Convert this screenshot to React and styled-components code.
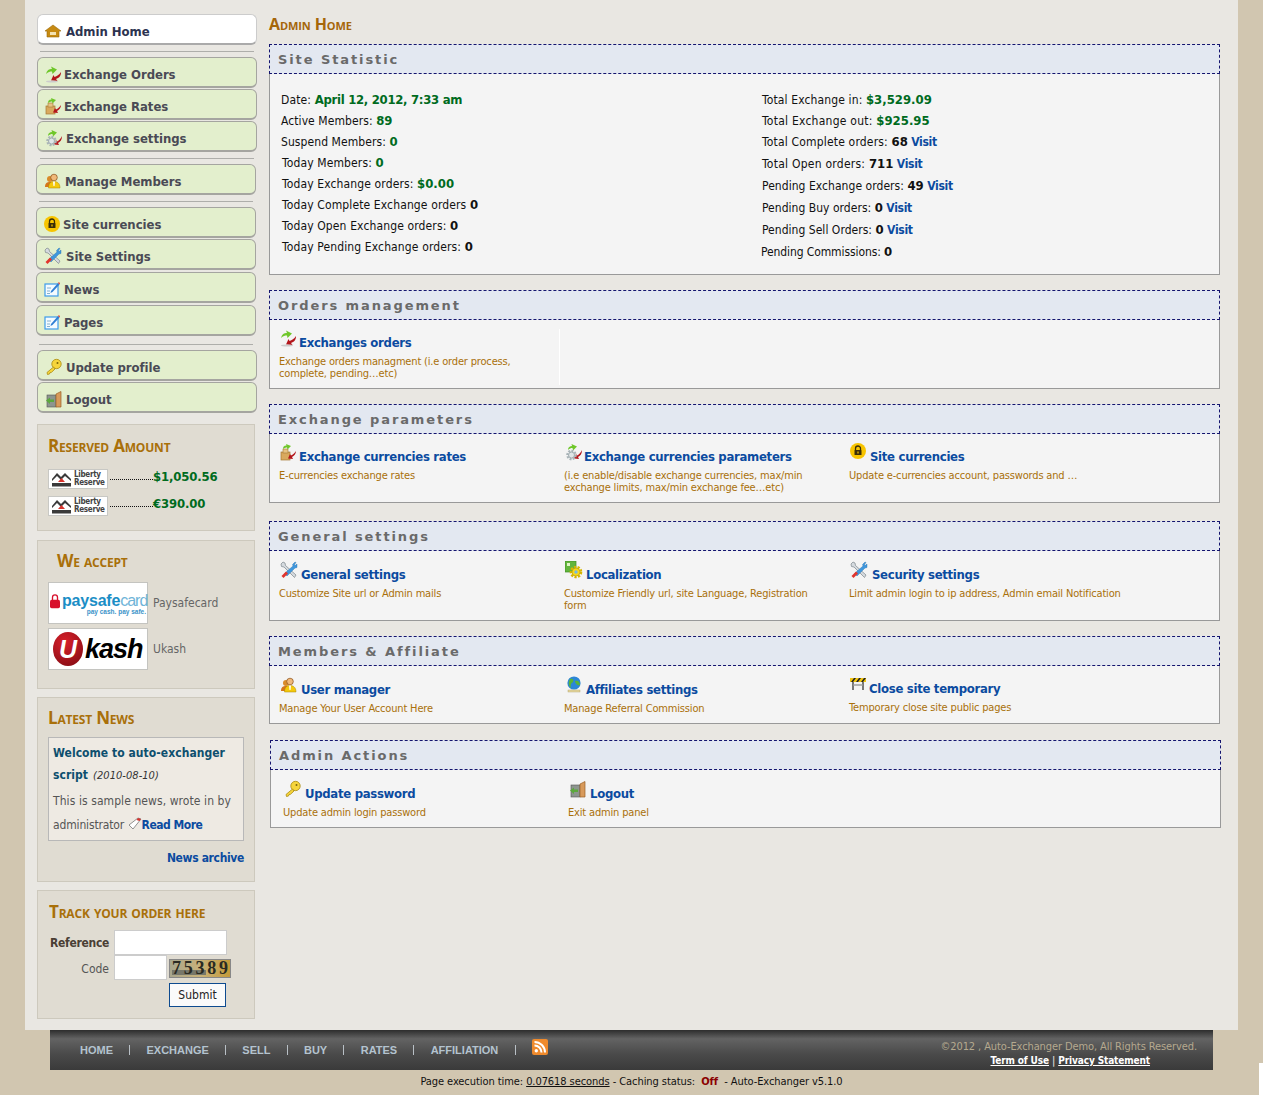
import React from "react";
import styled, { createGlobalStyle } from "styled-components";

const SANS = '"DejaVu Sans", Verdana, sans-serif';
const GREEN = "#006b1e";
const LINK = "#0b4ba0";
const GOLD = "#a9700a";

const GlobalStyle = createGlobalStyle`
  html, body {
    margin: 0;
    padding: 0;
    background: #d1c6b0;
  }
  body {
    color: #111;
    font-family: ${SANS};
    font-size: 12px;
    font-stretch: condensed;
  }
`;

const Page = styled.div`
  height: 1095px;
  overflow: hidden;
  position: relative;
  width: 1263px;
`;

const Shell = styled.div`
  background: #e9e7e2;
  display: flex;
  height: 1030px;
  margin-left: 25px;
  padding-left: 11px;
  width: 1202px;
`;

const Sidebar = styled.aside`
  flex: none;
  padding-top: 14px;
  width: 233px;
`;

const MenuItem = styled.a`
  align-items: center;
  background: ${({ $active }) => ($active ? "#fff" : "#e3efcd")};
  border: 1px solid #bbb;
  border-bottom: 2px solid #a5a5a0;
  border-color: ${({ $active }) => ($active ? "#ccc #ccc #aaa" : "#a5a5a0")};
  border-radius: 6px;
  box-sizing: border-box;
  color: ${({ $active }) => ($active ? "#2c3350" : "#4a4a55")};
  display: flex;
  font-size: 13px;
  font-weight: bold;
  height: 31px;
  letter-spacing: -0.04px;
  margin-left: ${({ $shift }) => $shift}px;
  margin-top: ${({ $gap }) => $gap}px;
  padding-left: 7px;
  padding-top: 4px;
  width: 220px;
`;

const MenuLabel = styled.span`
  margin-left: ${({ $indent }) => $indent}px;
  margin-top: 1px;
`;

const MenuRule = styled.hr`
  background: #aeaeaa;
  border: 0;
  height: 1px;
  margin: ${({ $top }) => $top}px 0 5px ${({ $shift }) => $shift + 3}px;
  width: 214px;
`;

const SideBox = styled.section`
  background: #e0dcd2;
  border: 1px solid #cdc9bd;
  box-sizing: border-box;
  height: ${({ $height }) => $height}px;
  margin-left: 1px;
  margin-top: ${({ $top }) => $top}px;
  padding: ${({ $pad }) => $pad};
  width: 218px;
`;

const BoxTitle = styled.h3`
  color: ${GOLD};
  font-family: "Open Sans", ${SANS};
  font-size: 17px;
  font-stretch: normal;
  font-variant: small-caps;
  font-weight: bold;
  letter-spacing: -0.2px;
  line-height: 20px;
  margin: -1px 0 4px;
  padding-left: ${({ $indent }) => $indent || 0}px;
`;

const ReserveRow = styled.div`
  align-items: flex-start;
  display: flex;
  height: 20px;
  margin-top: ${({ $top }) => $top}px;
`;

const LibertyLogo = styled.div`
  align-items: center;
  background: #fff;
  border: 1px solid #c8c8c4;
  box-sizing: border-box;
  display: flex;
  gap: 2px;
  height: 20px;
  padding-left: 3px;
  width: 60px;
`;

const LibertyText = styled.span`
  color: #444;
  font-size: 8px;
  font-weight: bold;
  letter-spacing: -0.3px;
  line-height: 8.5px;
`;

const Dots = styled.span`
  border-bottom: 1px dotted #111;
  height: 10px;
  margin-left: 2px;
  width: 43px;
`;

const Amount = styled.b`
  color: ${GREEN};
  font-size: 13px;
  letter-spacing: -0.15px;
  line-height: 15px;
`;

const AcceptRow = styled.div`
  align-items: center;
  color: #666;
  display: flex;
  gap: 5px;
  margin-top: ${({ $top }) => $top}px;
`;

const LogoCard = styled.div`
  align-items: center;
  background: #fff;
  border: 1px solid #c4c4c0;
  box-sizing: border-box;
  display: flex;
  height: 42px;
  position: relative;
  width: 100px;
`;

const PayWord = styled.span`
  color: #1b8ec6;
  font-family: "Liberation Sans", sans-serif;
  font-size: 16px;
  font-stretch: normal;
  font-weight: bold;
  letter-spacing: -0.2px;
  line-height: 18px;
  margin-left: 2px;
`;

const PayLight = styled.span`
  color: #6fb4d8;
  font-weight: normal;
  letter-spacing: -1px;
`;

const PayTag = styled.span`
  color: #3b93c9;
  font-family: "Liberation Sans", sans-serif;
  font-size: 6.5px;
  font-weight: bold;
  position: absolute;
  right: 1px;
  top: 25px;
`;

const PayStack = styled.div`
  align-items: center;
  display: flex;
  margin-top: -4px;
  padding-left: 1px;
`;

const KashWord = styled.span`
  color: #000;
  font-family: "Liberation Sans", sans-serif;
  font-size: 27px;
  font-stretch: normal;
  font-style: italic;
  font-weight: bold;
  letter-spacing: -1px;
  margin-left: 2px;
`;

const UkashBall = styled.span`
  align-items: center;
  background: radial-gradient(circle at 40% 30%, #d8202a, #7d0a12);
  border-radius: 50%;
  color: #fff;
  display: flex;
  flex: none;
  font-family: "Liberation Sans", sans-serif;
  font-size: 25px;
  font-style: italic;
  font-weight: bold;
  height: 34px;
  justify-content: center;
  margin-left: 4px;
  width: 30px;
`;

const NewsCard = styled.div`
  background: #eeeae3;
  border: 1px solid #b8b8b8;
  box-sizing: border-box;
  color: #555;
  height: 104px;
  letter-spacing: 0.08px;
  line-height: 24px;
  margin-top: 9px;
  padding: 4px 4px;
  width: 196px;
`;

const NewsHead = styled.b`
  color: #0d4f6e;
  display: block;
  letter-spacing: 0.05px;
  line-height: 22px;
  margin-bottom: 2px;
`;

const NewsDate = styled.i`
  color: #333;
  display: inline-block;
  font-size: 11px;
  font-weight: normal;
  margin-left: 5px;
`;

const NewsAuthor = styled.span`
  letter-spacing: -0.15px;
`;

const InlineLink = styled.a`
  color: ${LINK};
  font-weight: bold;
  letter-spacing: -0.5px;
`;

const ArchiveLink = styled.a`
  color: ${LINK};
  display: block;
  font-weight: bold;
  letter-spacing: -0.35px;
  margin-top: 10px;
  text-align: right;
  width: 196px;
`;

const TrackGrid = styled.div`
  display: grid;
  grid-template-columns: 64px 53px auto;
  grid-template-rows: 25px 28px 24px;
  margin-left: 1px;
  margin-top: 8px;
`;

const TrackLabel = styled.label`
  align-self: center;
  color: ${({ $strong }) => ($strong ? "#4a3f35" : "#555")};
  font-weight: ${({ $strong }) => ($strong ? "bold" : "normal")};
  letter-spacing: ${({ $strong }) => ($strong ? "-0.3px" : "0")};
  padding-right: 5px;
  text-align: right;
`;

const TrackInput = styled.input`
  background: #fff;
  border: 1px solid #ccc;
  box-sizing: border-box;
  grid-column: ${({ $span }) => ($span ? "2 / span 2" : "auto")};
  height: 25px;
  padding: 0;
  width: ${({ $span }) => ($span ? 113 : 53)}px;
`;

const Captcha = styled.svg`
  margin: 4px 0 0 2px;
`;

const SubmitButton = styled.button`
  background: #fafafa;
  border: 1px solid #0d4a8f;
  box-sizing: border-box;
  color: #222;
  font-family: ${SANS};
  font-size: 12px;
  font-stretch: condensed;
  grid-column: 3;
  height: 24px;
  margin-left: 2px;
  padding: 0;
  width: 57px;
`;

const Content = styled.main`
  flex: none;
  width: 952px;
`;

const PageTitle = styled.h1`
  color: #a5660a;
  font-family: "Open Sans", ${SANS};
  font-size: 16px;
  font-stretch: normal;
  font-variant: small-caps;
  font-weight: bold;
  height: 44px;
  letter-spacing: -0.1px;
  line-height: 48px;
  margin: 0;
`;

const Panel = styled.section`
  margin-bottom: ${({ $after }) => $after}px;
  margin-left: ${({ $shift }) => $shift || 0}px;
  width: 951px;
`;

const PanelHead = styled.h2`
  background: #e3e8f1;
  border: 1px dashed #14146e;
  box-sizing: border-box;
  color: #6a6a6a;
  font-family: ${SANS};
  font-size: 13px;
  font-stretch: normal;
  font-weight: bold;
  height: 30px;
  letter-spacing: 1.9px;
  line-height: 30px;
  margin: 0;
  padding-left: 8px;
`;

const PanelBody = styled.div`
  background: #f4f4f4;
  border: 1px solid #999;
  border-top: 0;
  box-sizing: border-box;
  height: ${({ $height }) => $height}px;
`;

const StatGrid = styled.div`
  display: grid;
  grid-template-columns: 481px 1fr;
  padding: 15px 0 0 11px;
`;

const StatRow = styled.div`
  height: ${({ $h }) => $h}px;
  letter-spacing: ${({ $spacing }) => $spacing}px;
  line-height: 21px;
  margin-left: ${({ $shift }) => $shift || 0}px;
`;

const StatValue = styled.b`
  color: ${({ $plain }) => ($plain ? "#111" : GREEN)};
  font-size: 13px;
  letter-spacing: ${({ $tight }) => ($tight ? "-0.3px" : "0")};
`;

const VisitLink = styled.a`
  color: ${LINK};
  font-weight: bold;
  letter-spacing: -0.3px;
`;

const TileGrid = styled.div`
  display: grid;
  grid-template-columns: repeat(3, 285px);
  padding: ${({ $pad }) => $pad};
`;

const Tile = styled.div`
  border-right: ${({ $divided }) => ($divided ? "1px solid #fff" : "0")};
  height: ${({ $divided }) => ($divided ? "56px" : "auto")};
  margin-top: ${({ $lift }) => ($lift ? "-1px" : 0)};
  width: ${({ $divided }) => ($divided ? "280px" : "auto")};
`;

const TileHead = styled.div`
  align-items: flex-end;
  color: ${LINK};
  display: flex;
  font-size: 13px;
  font-weight: bold;
  height: 21px;
  letter-spacing: -0.3px;
`;

const TileIcon = styled.span`
  display: block;
  flex: none;
  height: 21px;
  padding-left: 1px;
  width: ${({ $w }) => $w - 1}px;
`;

const TileText = styled.p`
  color: ${GOLD};
  font-size: 11px;
  letter-spacing: -0.17px;
  line-height: 12px;
  margin: 6px 0 0;
  width: ${({ $w }) => $w || 250}px;
`;

const Footer = styled.footer`
  align-items: flex-start;
  background: linear-gradient(#2d2d2d, #636363 22%, #4a4a4a 60%, #3a3a3a);
  box-sizing: border-box;
  display: flex;
  height: 40px;
  justify-content: space-between;
  margin-left: 50px;
  padding: 0 16px 0 30px;
  width: 1163px;
`;

const FootNav = styled.nav`
  align-items: center;
  display: flex;
  height: 40px;
`;

const FootLink = styled.a`
  color: #b4c3cf;
  font-family: "Liberation Sans", sans-serif;
  font-size: 11px;
  font-stretch: normal;
  font-weight: bold;
`;

const FootBar = styled.span`
  background: #b9c0c6;
  height: 10px;
  margin: 0 16.25px;
  width: 1px;
`;

const Legal = styled.div`
  color: #b5a98f;
  font-size: 11px;
  letter-spacing: -0.1px;
  line-height: 15px;
  padding-top: 9px;
  text-align: right;
`;

const LegalLinks = styled.div`
  color: #d5d5d5;
  font-size: 10px;
  font-weight: bold;
  letter-spacing: -0.12px;
  margin-right: 47px;
  margin-top: -1px;
  text-align: right;
`;

const LegalLink = styled.a`
  color: #fff;
  text-decoration: underline;
`;

const Execution = styled.div`
  color: #111;
  font-size: 11px;
  letter-spacing: -0.07px;
  line-height: 24px;
  text-align: center;
`;

const ExecTime = styled.span`
  text-decoration: underline;
`;

const CacheOff = styled.b`
  color: #8b0000;
`;

const Corner = styled.div`
  background: #fff;
  bottom: 0;
  height: 32px;
  position: absolute;
  right: 0;
  width: 4px;
`;

const Glyph = ({ children, size = 18, box = 18 }) => (
  <svg width={size} height={size} viewBox={`0 0 ${box} ${box}`} style={{ display: "block" }}>
    {children}
  </svg>
);

const Arrows = () => (
  <>
    <path d="M1 9 C2 5 4 4 7 4 L6 1.5 L12 4.5 L7.5 9 L7 6.5 C5 6.5 3 7 1 9Z" fill="#6fc72a" />
    <path d="M16 7 C16 11 14 13 11 14 L12.5 16 L6 15.5 L8.5 10 L9.5 12 C12 11 14 10 16 7Z" fill="#b3151b" />
  </>
);

const ExchangeIcon = () => (
  <Glyph>
    <Arrows />
    <ellipse cx="7" cy="16.5" rx="6" ry="1" fill="#ccc" />
  </Glyph>
);

const RatesIcon = () => (
  <Glyph>
    <rect x="1" y="9" width="9" height="8" fill="#d9a95e" stroke="#a57a34" strokeWidth=".7" />
    <rect x="3" y="6" width="5" height="4" fill="#e6c283" stroke="#a57a34" strokeWidth=".6" />
    <path d="M3 6 C3 3 5 2.5 6.5 2.5 L6 1 L11 3 L7.5 6.5 L7 4.5 C5.5 4.5 4.5 5 3 6Z" fill="#6fc72a" />
    <path d="M16 8 C16 11 14 13 12 14 L13 16 L8 15.5 L10 11 L11 12.5 C13 11.5 14.5 10 16 8Z" fill="#b3151b" />
  </Glyph>
);

const GearArrowsIcon = () => (
  <Glyph>
    <path d="M3 7 C3 4 5 3 7 3 L6.5 1 L12 3.5 L8 7.5 L7.5 5 C6 5 4.5 5.5 3 7Z" fill="#6fc72a" />
    <path d="M17 7 C17 11 15 13 13 14 L14 16 L9 15.5 L11 11 L12 12.5 C14 11.5 15.5 10 17 7Z" fill="#b3151b" />
    <circle cx="6.5" cy="12" r="4.2" fill="none" stroke="#a9b4b8" strokeWidth="2.2" strokeDasharray="2 1.2" />
    <circle cx="6.5" cy="12" r="3" fill="#dfe5e7" stroke="#8d9a9f" strokeWidth=".8" />
  </Glyph>
);

const HomeIcon = () => (
  <Glyph size={16} box={16}>
    <path d="M0 8 L8 2 L16 8 L14 8 L14 14 L2 14 L2 8Z" fill="#c68a12" stroke="#9c6a08" strokeWidth=".6" />
    <rect x="5" y="9" width="6" height="3" fill="#f3e2b2" />
  </Glyph>
);

const MembersIcon = () => (
  <Glyph>
    <circle cx="6" cy="7" r="3" fill="#d98b2a" />
    <path d="M1 15 C1 11 3 10 6 10 C9 10 10 11 10 15Z" fill="#d4761c" />
    <circle cx="10" cy="5.5" r="3.3" fill="#f0b97a" stroke="#8a4f18" strokeWidth=".7" />
    <path d="M4.5 16 C4.5 11 7 9.5 10 9.5 C13 9.5 16 11 16 16Z" fill="#f4c90c" stroke="#a88505" strokeWidth=".5" />
    <path d="M9 9.5 L11 9.5 L10.5 14 L9.5 14Z" fill="#fff" />
  </Glyph>
);

const LockCoinIcon = ({ size = 16 }) => (
  <Glyph size={size} box={16}>
    <circle cx="8" cy="8" r="8" fill="#f7c400" />
    <path d="M5.5 7 V5.5 a2.5 2.5 0 0 1 5 0 V7" fill="none" stroke="#3a2e08" strokeWidth="1.3" />
    <rect x="4.5" y="7" width="7" height="5" rx=".6" fill="#3a2e08" />
    <rect x="7.4" y="8.5" width="1.2" height="2" fill="#f7c400" />
  </Glyph>
);

const ToolsIcon = () => (
  <Glyph>
    <path d="M1 3 L3 1 L5 2 L5.5 4.5 L16 14 L14.5 16.5 L4 6 L1.5 5.5Z" fill="#d5dadf" stroke="#7d868d" strokeWidth=".7" />
    <path d="M15 1 L12.5 3.5 L13 5 L4.5 12.5 L7 15 L15 7 L17 6.5 L17 3 L15 4.5 L14.5 3.5 L16 1.5Z" fill="#3f97dd" stroke="#2670ad" strokeWidth=".4" />
    <path d="M1.5 15 L6 10.5 L8 12.5 L3.5 17Z" fill="#e2352d" />
  </Glyph>
);

const NoteIcon = ({ size = 16 }) => (
  <Glyph size={size} box={16}>
    <rect x="1" y="3" width="13" height="12" fill="#f4fbff" stroke="#3c9bea" strokeWidth="1.2" />
    <path d="M3 7 H7 M3 10 H6 M3 12.5 H6" stroke="#6a9ec4" strokeWidth=".8" />
    <path d="M7 10 L14 2 L15.5 3.5 L8.5 11 L6.5 12Z" fill="#2f7fd4" />
    <path d="M14 2 L15 1 L16 2.5 L15.5 3.5Z" fill="#e2453a" />
  </Glyph>
);

const KeyIcon = () => (
  <Glyph>
    <circle cx="11.5" cy="6" r="4.7" fill="#f6d53b" stroke="#a98a10" strokeWidth=".8" />
    <circle cx="12.5" cy="5" r="1" fill="#7d640a" />
    <path d="M8.5 9 L2 14.5 L2.5 16.5 L4.5 16 L5 14.5 L6.5 14.3 L10 11Z" fill="#f6d53b" stroke="#a98a10" strokeWidth=".8" />
  </Glyph>
);

const DoorIcon = () => (
  <Glyph>
    <rect x="2" y="5" width="9" height="12" fill="#8d958f" stroke="#555" strokeWidth=".6" />
    <path d="M11 4 L16 1.5 V17 H11Z" fill="#d89a5b" stroke="#9a6026" strokeWidth=".7" />
    <path d="M1 10.5 L5 7.5 V9.5 H9 V12 H5 V14Z" fill="#5ba83c" />
  </Glyph>
);

const LocalizationIcon = () => (
  <Glyph>
    <rect x="0" y="0" width="11" height="11" fill="#62b53c" stroke="#3c8a22" strokeWidth=".7" />
    <rect x="2" y="2" width="3" height="3" fill="#dff3c5" />
    <circle cx="11" cy="11" r="5" fill="none" stroke="#d7b600" strokeWidth="2.6" strokeDasharray="2.2 1.3" />
    <circle cx="11" cy="11" r="4" fill="#f7d917" stroke="#b2930a" strokeWidth=".6" />
    <circle cx="11" cy="11" r="1.7" fill="#73b8e6" />
  </Glyph>
);

const GlobeIcon = () => (
  <Glyph>
    <circle cx="9" cy="7" r="6.6" fill="#2c86d6" />
    <path d="M5 3 C8 2 9 4 8 6 C6 7 5 9 6 12 C3.5 10 3 6 5 3Z M10 5 C13 4 15 6 15 9 C13 10 10 8 10 5Z" fill="#58b33a" />
    <rect x="3" y="14" width="12" height="2" fill="#e8d9a0" stroke="#a89a60" strokeWidth=".4" />
  </Glyph>
);

const BarrierIcon = () => (
  <Glyph>
    <path d="M0 3 H16 V7 H0Z" fill="#f1c40f" />
    <path d="M1 7 L4 3 H6 L3 7Z M6 7 L9 3 H11 L8 7Z M11 7 L14 3 H16 L13 7Z" fill="#222" />
    <path d="M3 7 V15 M13 7 V15" stroke="#777" strokeWidth="2" />
    <path d="M3 10 H13" stroke="#999" strokeWidth="1.4" />
  </Glyph>
);

const LibertyMark = () => (
  <svg width="20" height="15" viewBox="0 0 20 15" style={{ flex: "none" }}>
    <path d="M0 7 L5 1 L9 5 L13 1 L19 7 L19 9 L13 4 L9 8 L5 4 L0 9Z" fill="#3a3a3a" />
    <path d="M6 10 L9.5 6 L13 10Z" fill="#d6322c" />
    <rect y="11" width="19" height="3.5" fill="#3a3a3a" />
  </svg>
);

const PadlockMark = () => (
  <svg width="10" height="17" viewBox="0 0 12 18" style={{ flex: "none" }}>
    <path d="M3 8 V4 a3 3 0 0 1 6 0 V8" fill="none" stroke="#d8102c" strokeWidth="1.6" />
    <rect x="0" y="7" width="12" height="10" rx="2" fill="#d8102c" />
  </svg>
);

const PenMark = () => (
  <svg width="14" height="14" viewBox="0 0 14 14" style={{ verticalAlign: "-2px" }}>
    <path d="M1 8 L5 12 L13 2 L10 1Z" fill="#fff" stroke="#777" strokeWidth=".8" />
    <path d="M10 1 L13 2 L11.5 4 L8.5 3Z" fill="#d6322c" />
  </svg>
);

const RssIcon = () => (
  <svg width="16" height="16" viewBox="0 0 16 16" style={{ display: "block", marginTop: -6 }}>
    <rect width="16" height="16" rx="2" fill="#ef8a2c" />
    <circle cx="4.3" cy="11.7" r="1.7" fill="#fff" />
    <path d="M2.5 6.5 A7 7 0 0 1 9.5 13.5 M2.5 3 A10.5 10.5 0 0 1 13 13.5" fill="none" stroke="#fff" strokeWidth="2" />
  </svg>
);

const menu = [
  { label: "Admin Home", icon: <HomeIcon />, shift: 1, gap: 0, active: true, indent: 5, ruleTop: 6 },
  { label: "Exchange Orders", icon: <ExchangeIcon />, shift: 1, gap: 0, indent: 1 },
  { label: "Exchange Rates", icon: <RatesIcon />, shift: 1, gap: 1, indent: 1 },
  { label: "Exchange settings", icon: <GearArrowsIcon />, shift: 1, gap: 1, indent: 3, ruleTop: 6 },
  { label: "Manage Members", icon: <MembersIcon />, shift: 0, gap: 0, indent: 3, ruleTop: 6 },
  { label: "Site currencies", icon: <LockCoinIcon />, shift: 0, gap: 0, indent: 3 },
  { label: "Site Settings", icon: <ToolsIcon />, shift: 0, gap: 1, indent: 4 },
  { label: "News", icon: <NoteIcon />, shift: 0, gap: 2, indent: 4 },
  { label: "Pages", icon: <NoteIcon />, shift: 0, gap: 2, indent: 4, ruleTop: 8 },
  { label: "Update profile", icon: <KeyIcon />, shift: 1, gap: 0, indent: 3 },
  { label: "Logout", icon: <DoorIcon />, shift: 1, gap: 1, indent: 3 },
];

const stats = [
  [
    { label: "Date: ", value: "April 12, 2012, 7:33 am", tight: true },
    { label: "Active Members: ", value: "89", spacing: 0.08 },
    { label: "Suspend Members: ", value: "0", spacing: 0.08 },
    { label: "Today Members: ", value: "0", shift: 1 },
    { label: "Today Exchange orders: ", value: "$0.00", shift: 1 },
    { label: "Today Complete Exchange orders ", value: "0", plain: true, shift: 1 },
    { label: "Today Open Exchange orders: ", value: "0", plain: true, shift: 1 },
    { label: "Today Pending Exchange orders: ", value: "0", plain: true, shift: 1 },
  ],
  [
    { label: "Total Exchange in: ", value: "$3,529.09", h: 21 },
    { label: "Total Exchange out: ", value: "$925.95", h: 21, spacing: 0.25 },
    { label: "Total Complete orders: ", value: "68", plain: true, visit: true, h: 22, spacing: 0.18 },
    { label: "Total Open orders: ", value: "711", plain: true, visit: true, h: 22, spacing: 0.25 },
    { label: "Pending Exchange orders: ", value: "49", plain: true, visit: true, h: 22, spacing: 0.05 },
    { label: "Pending Buy orders: ", value: "0", plain: true, visit: true, h: 22, spacing: 0.03 },
    { label: "Pending Sell Orders: ", value: "0", plain: true, visit: true, h: 22, spacing: 0.03 },
    { label: "Pending Commissions: ", value: "0", plain: true, shift: -1, h: 22, spacing: -0.1 },
  ],
];

const panels = [
  {
    title: "Orders management",
    height: 69,
    after: 15,
    pad: "9px 0 0 9px",
    tiles: [
      {
        icon: <ExchangeIcon />,
        w: 20,
        title: "Exchanges orders",
        text: "Exchange orders managment (i.e order process, complete, pending…etc)",
        divided: true,
      },
    ],
  },
  {
    title: "Exchange parameters",
    height: 69,
    after: 18,
    pad: "9px 0 0 9px",
    tiles: [
      { icon: <RatesIcon />, w: 20, title: "Exchange currencies rates", text: "E-currencies exchange rates" },
      {
        icon: <GearArrowsIcon />,
        w: 20,
        title: "Exchange currencies parameters",
        text: "(i.e enable/disable exchange currencies, max/min exchange limits, max/min exchange fee…etc)",
      },
      {
        icon: <LockCoinIcon />,
        w: 21,
        title: "Site currencies",
        text: "Update e-currencies account, passwords and …",
        textW: 270,
      },
    ],
  },
  {
    title: "General settings",
    height: 70,
    after: 15,
    pad: "10px 0 0 9px",
    tiles: [
      { icon: <ToolsIcon />, w: 22, title: "General settings", text: "Customize Site url or Admin mails" },
      {
        icon: <LocalizationIcon />,
        w: 22,
        title: "Localization",
        text: "Customize Friendly url, site Language, Registration form",
      },
      {
        icon: <ToolsIcon />,
        w: 23,
        title: "Security settings",
        text: "Limit admin login to ip address, Admin email Notification",
        textW: 280,
      },
    ],
  },
  {
    title: "Members & Affiliate",
    height: 58,
    after: 16,
    pad: "10px 0 0 9px",
    tiles: [
      { icon: <MembersIcon />, w: 22, title: "User manager", text: "Manage Your User Account Here" },
      { icon: <GlobeIcon />, w: 22, title: "Affiliates settings", text: "Manage Referral Commission" },
      {
        icon: <BarrierIcon />,
        w: 20,
        title: "Close site temporary",
        text: "Temporary close site public pages",
        lift: true,
      },
    ],
  },
  {
    title: "Admin Actions",
    height: 58,
    after: 0,
    shift: 1,
    pad: "10px 0 0 12px",
    tiles: [
      { icon: <KeyIcon />, w: 22, title: "Update password", text: "Update admin login password" },
      { icon: <DoorIcon />, w: 22, title: "Logout", text: "Exit admin panel" },
    ],
  },
];

const footLinks = ["HOME", "EXCHANGE", "SELL", "BUY", "RATES", "AFFILIATION"];

function Menu() {
  return (
    <nav>
      {menu.map((item, index) => (
        <React.Fragment key={item.label}>
          <MenuItem $active={item.active} $shift={item.shift} $gap={item.gap}>
            {item.icon}
            <MenuLabel $indent={item.indent}>{item.label}</MenuLabel>
          </MenuItem>
          {item.ruleTop && index < menu.length - 1 && <MenuRule $top={item.ruleTop} $shift={item.shift} />}
        </React.Fragment>
      ))}
    </nav>
  );
}

function ReservedBox() {
  return (
    <SideBox $top={11} $height={107} $pad="12px 0 0 10px">
      <BoxTitle>Reserved Amount</BoxTitle>
      {["$1,050.56", "€390.00"].map((amount, index) => (
        <ReserveRow key={amount} $top={index ? 7 : 13}>
          <LibertyLogo>
            <LibertyMark />
            <LibertyText>
              Liberty
              <br />
              Reserve
            </LibertyText>
          </LibertyLogo>
          <Dots />
          <Amount>{amount}</Amount>
        </ReserveRow>
      ))}
    </SideBox>
  );
}

function AcceptBox() {
  return (
    <SideBox $top={9} $height={149} $pad="11px 0 0 10px">
      <BoxTitle $indent={9}>We accept</BoxTitle>
      <AcceptRow $top={11}>
        <LogoCard>
          <PayStack>
            <PadlockMark />
            <PayWord>
              paysafe<PayLight>card</PayLight>
            </PayWord>
          </PayStack>
          <PayTag>pay cash. pay safe.</PayTag>
        </LogoCard>
        Paysafecard
      </AcceptRow>
      <AcceptRow $top={4}>
        <LogoCard>
          <UkashBall>U</UkashBall>
          <KashWord>kash</KashWord>
        </LogoCard>
        Ukash
      </AcceptRow>
    </SideBox>
  );
}

function NewsBox() {
  return (
    <SideBox $top={8} $height={185} $pad="11px 0 0 10px">
      <BoxTitle>Latest News</BoxTitle>
      <NewsCard>
        <NewsHead>
          Welcome to auto-exchanger script
          <NewsDate>(2010-08-10)</NewsDate>
        </NewsHead>
        This is sample news, wrote in by <NewsAuthor>administrator</NewsAuthor> <PenMark />
        <InlineLink>Read More</InlineLink>
      </NewsCard>
      <ArchiveLink>News archive</ArchiveLink>
    </SideBox>
  );
}

function TrackBox() {
  return (
    <SideBox $top={8} $height={129} $pad="12px 0 0 11px">
      <BoxTitle>Track your order here</BoxTitle>
      <TrackGrid>
        <TrackLabel $strong>Reference</TrackLabel>
        <TrackInput $span />
        <TrackLabel>Code</TrackLabel>
        <TrackInput />
        <Captcha width="62" height="19" viewBox="0 0 62 19">
          <defs>
            <linearGradient id="captcha-bg" x1="0" x2="1" y1="0" y2="0">
              <stop offset="0" stopColor="#a8a68c" />
              <stop offset="0.5" stopColor="#c9b27a" />
              <stop offset="1" stopColor="#c49a38" />
            </linearGradient>
          </defs>
          <rect x=".5" y=".5" width="61" height="18" fill="url(#captcha-bg)" stroke="#888" />
          <rect x="3" y="11" width="34" height="5" fill="#77776a" />
          <text x="3" y="15" fontFamily="Liberation Serif" fontSize="18" fontWeight="bold" fill="#2a2a22" textLength="56">
            75389
          </text>
        </Captcha>
        <span />
        <span />
        <SubmitButton>Submit</SubmitButton>
      </TrackGrid>
    </SideBox>
  );
}

function Statistics() {
  return (
    <Panel $after={15}>
      <PanelHead>Site Statistic</PanelHead>
      <PanelBody $height={201}>
        <StatGrid>
          {stats.map((column, index) => (
            <div key={index}>
              {column.map((row) => (
                <StatRow key={row.label} $h={row.h || 21} $shift={row.shift} $spacing={row.spacing ?? 0.13}>
                  {row.label}
                  <StatValue $plain={row.plain} $tight={row.tight}>
                    {row.value}
                  </StatValue>
                  {row.visit && <VisitLink> Visit</VisitLink>}
                </StatRow>
              ))}
            </div>
          ))}
        </StatGrid>
      </PanelBody>
    </Panel>
  );
}

export default function App() {
  return (
    <Page>
      <GlobalStyle />
      <Shell>
        <Sidebar>
          <Menu />
          <ReservedBox />
          <AcceptBox />
          <NewsBox />
          <TrackBox />
        </Sidebar>
        <Content>
          <PageTitle>Admin Home</PageTitle>
          <Statistics />
          {panels.map((panel) => (
            <Panel key={panel.title} $after={panel.after} $shift={panel.shift}>
              <PanelHead>{panel.title}</PanelHead>
              <PanelBody $height={panel.height}>
                <TileGrid $pad={panel.pad}>
                  {panel.tiles.map((tile) => (
                    <Tile key={tile.title} $divided={tile.divided} $lift={tile.lift}>
                      <TileHead>
                        <TileIcon $w={tile.w}>{tile.icon}</TileIcon>
                        {tile.title}
                      </TileHead>
                      <TileText $w={tile.textW}>{tile.text}</TileText>
                    </Tile>
                  ))}
                </TileGrid>
              </PanelBody>
            </Panel>
          ))}
        </Content>
      </Shell>
      <Footer>
        <FootNav>
          {footLinks.map((link) => (
            <React.Fragment key={link}>
              <FootLink>{link}</FootLink>
              <FootBar />
            </React.Fragment>
          ))}
          <RssIcon />
        </FootNav>
        <Legal>
          ©2012 , Auto-Exchanger Demo, All Rights Reserved.
          <LegalLinks>
            <LegalLink>Term of Use</LegalLink> | <LegalLink>Privacy Statement</LegalLink>
          </LegalLinks>
        </Legal>
      </Footer>
      <Execution>
        Page execution time: <ExecTime>0.07618 seconds</ExecTime> - Caching status: &nbsp;<CacheOff>Off</CacheOff>
        &nbsp; - Auto-Exchanger v5.1.0
      </Execution>
      <Corner />
    </Page>
  );
}
